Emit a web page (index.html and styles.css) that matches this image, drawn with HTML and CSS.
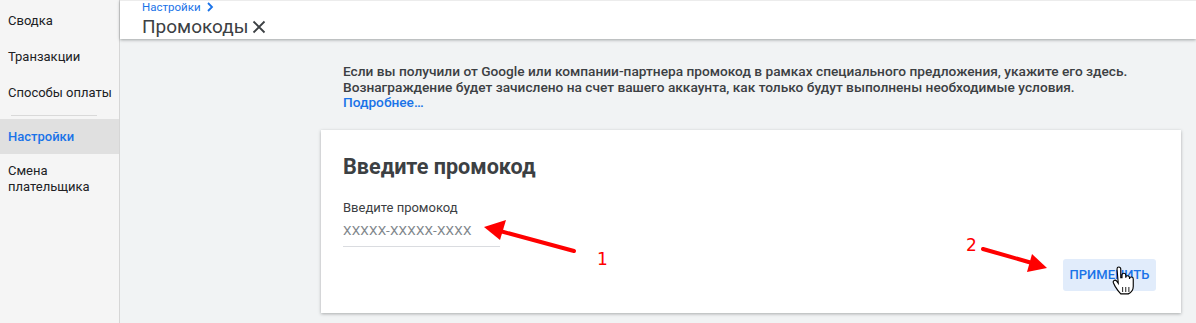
FILE: index.html
```html
<!doctype html>
<html lang="ru">
<head>
    <meta charset="utf-8">
    <title>Промокоды</title>
    <link rel="stylesheet" href="styles.css">
</head>
<body>

<div class="layout">
    <nav class="sidebar">
        <a class="nav-item">Сводка</a>
        <a class="nav-item">Транзакции</a>
        <a class="nav-item">Способы оплаты</a>
        <div class="nav-divider"></div>
        <a class="nav-item active">Настройки</a>
        <a class="nav-item">Смена<br>плательщика</a>
    </nav>

    <div class="page">
        <header class="page-header">
            <div class="breadcrumb">Настройки
                <svg width="10" height="10" viewBox="0 0 10 10"><path d="M3 1 L7 5 L3 9" fill="none" stroke="#1a73e8" stroke-width="1.8"/></svg>
            </div>
            <h1 class="page-title">Промокоды
                <svg width="14" height="14" viewBox="0 0 14 14"><path d="M1.5 1.5 L12.5 12.5 M12.5 1.5 L1.5 12.5" stroke="#3c4043" stroke-width="1.8"/></svg>
            </h1>
        </header>

        <main class="content">
            <p class="intro">
                Если вы получили от Google или компании-партнера промокод в рамках специального предложения, укажите его здесь.<br>
                Вознаграждение будет зачислено на счет вашего аккаунта, как только будут выполнены необходимые условия.<br>
                <a class="more-link">Подробнее…</a>
            </p>

            <section class="card">
                <h2 class="card-title">Введите промокод</h2>
                <label class="field-label" for="promo">Введите промокод</label>
                <input id="promo" class="field-input" type="text" placeholder="XXXXX-XXXXX-XXXX">
                <div class="card-actions">
                    <button class="apply-btn">ПРИМЕНИТЬ</button>
                </div>
            </section>
        </main>
    </div>
</div>

<!-- annotations drawn over the screenshot -->
<svg class="annotations" width="1196" height="323" viewBox="0 0 1196 323">
    <line x1="574" y1="251" x2="500" y2="231" stroke="#f00" stroke-width="4" stroke-linecap="round"/>
    <polygon points="484,227 506,220 500,240" fill="#f00"/>
    <text x="597" y="265" class="mark">1</text>

    <line x1="983" y1="249" x2="1032" y2="263" stroke="#f00" stroke-width="4" stroke-linecap="round"/>
    <polygon points="1047,268 1027,272 1032,254" fill="#f00"/>
    <text x="966" y="251" class="mark">2</text>

    <g transform="translate(1112,267) scale(1.25)">
        <path d="M4 1.5 a1.5 1.5 0 0 1 3 0 v7 h1 v-2 a1.5 1.5 0 0 1 3 0 v2 a1.5 1.5 0 0 1 3 0 v1 a1.5 1.5 0 0 1 3 0 v6 c0 3 -2 5 -4 6 h-6 c-1.5 -1.5 -3 -3.5 -4.5 -6 l-1.5 -3 a1.5 1.5 0 0 1 2.5 -1.5 l1.5 2 z" fill="#fff" stroke="#000" stroke-width="0.9"/>
        <path d="M8.5 16 v4 M11 16 v4 M13.5 16 v4" stroke="#000" stroke-width="0.7"/>
    </g>
</svg>

</body>
</html>
```

FILE: styles.css
```css
body {
    margin: 0;
    font-family: Roboto, "Liberation Sans", sans-serif;
    background-color: #f1f3f4;
    color: #3c4043;
    width: 1196px;
    height: 323px;
    overflow: hidden;
    position: relative;
}

.layout {
    display: flex;
    height: 323px;
}

.sidebar {
    width: 119px;
    flex-shrink: 0;
    background-color: #f5f5f5;
    border-right: 1px solid #d6d6d6;
    display: flex;
    flex-direction: column;
    padding-top: 4px;
}

.nav-item {
    display: block;
    padding: 9px 8px 11px 8px;
    font-size: 13px;
    line-height: 16px;
    color: #202124;
    white-space: nowrap;
}

.nav-divider {
    height: 1px;
    background-color: #d9d9d9;
    margin: 3px 22px 3px 11px;
}

.nav-item.active {
    background-color: #e0e0e0;
    color: #1a73e8;
    font-weight: 500;
    padding: 10px 8px 9px 8px;
}

.page {
    flex: 1;
    display: flex;
    flex-direction: column;
}

.page-header {
    background-color: #ffffff;
    height: 39px;
    padding-left: 22px;
    box-shadow: 0 1px 3px rgba(60, 64, 67, 0.45);
    border-top: 1px solid #ececec;
    box-sizing: border-box;
    position: relative;
    z-index: 1;
}

.breadcrumb {
    font-size: 11.5px;
    line-height: 12px;
    color: #1a73e8;
    display: flex;
    align-items: center;
    gap: 4px;
}

.page-title {
    margin: 3px 0 0 0;
    font-size: 19px;
    font-weight: 400;
    line-height: 22px;
    color: #3c4043;
    display: flex;
    align-items: center;
    gap: 4px;
}

.content {
    margin-left: 201px;
    width: 860px;
    padding-top: 25px;
}

.intro {
    margin: 0 0 19px 0;
    padding: 0 22px;
    font-size: 13.7px;
    font-weight: 500;
    line-height: 15.5px;
    color: #3c4043;
    white-space: nowrap;
}

.more-link {
    color: #1a73e8;
}

.card {
    background-color: #ffffff;
    box-shadow: 0 1px 3px rgba(60, 64, 67, 0.4);
    padding: 24px 22px 20px 22px;
    height: 139px;
    display: flex;
    flex-direction: column;
    align-items: flex-start;
}

.card-title {
    margin: 0 0 20px 0;
    font-size: 21.6px;
    font-weight: 700;
    line-height: 26px;
    color: #3c4043;
}

.field-label {
    font-size: 13px;
    line-height: 16px;
    color: #3c4043;
}

.field-input {
    margin-top: 6px;
    width: 157px;
    border: none;
    border-bottom: 1px solid #dadce0;
    padding: 0 0 8px 0;
    font-family: inherit;
    font-size: 13.5px;
    letter-spacing: 0.2px;
    outline: none;
    color: #3c4043;
}

.field-input::placeholder {
    color: #80868b;
}

.card-actions {
    align-self: stretch;
    display: flex;
    justify-content: flex-end;
    margin-top: 12px;
    margin-right: 3px;
}

.apply-btn {
    background-color: #e1ecfb;
    color: #1a73e8;
    border: none;
    border-radius: 3px;
    width: 93px;
    height: 32px;
    font-family: inherit;
    font-size: 13px;
    font-weight: 500;
    padding: 0;
}

.annotations {
    position: absolute;
    top: 0;
    left: 0;
    pointer-events: none;
}

.mark {
    fill: #f00;
    font-family: "DejaVu Sans", sans-serif;
    font-size: 17px;
}
```
